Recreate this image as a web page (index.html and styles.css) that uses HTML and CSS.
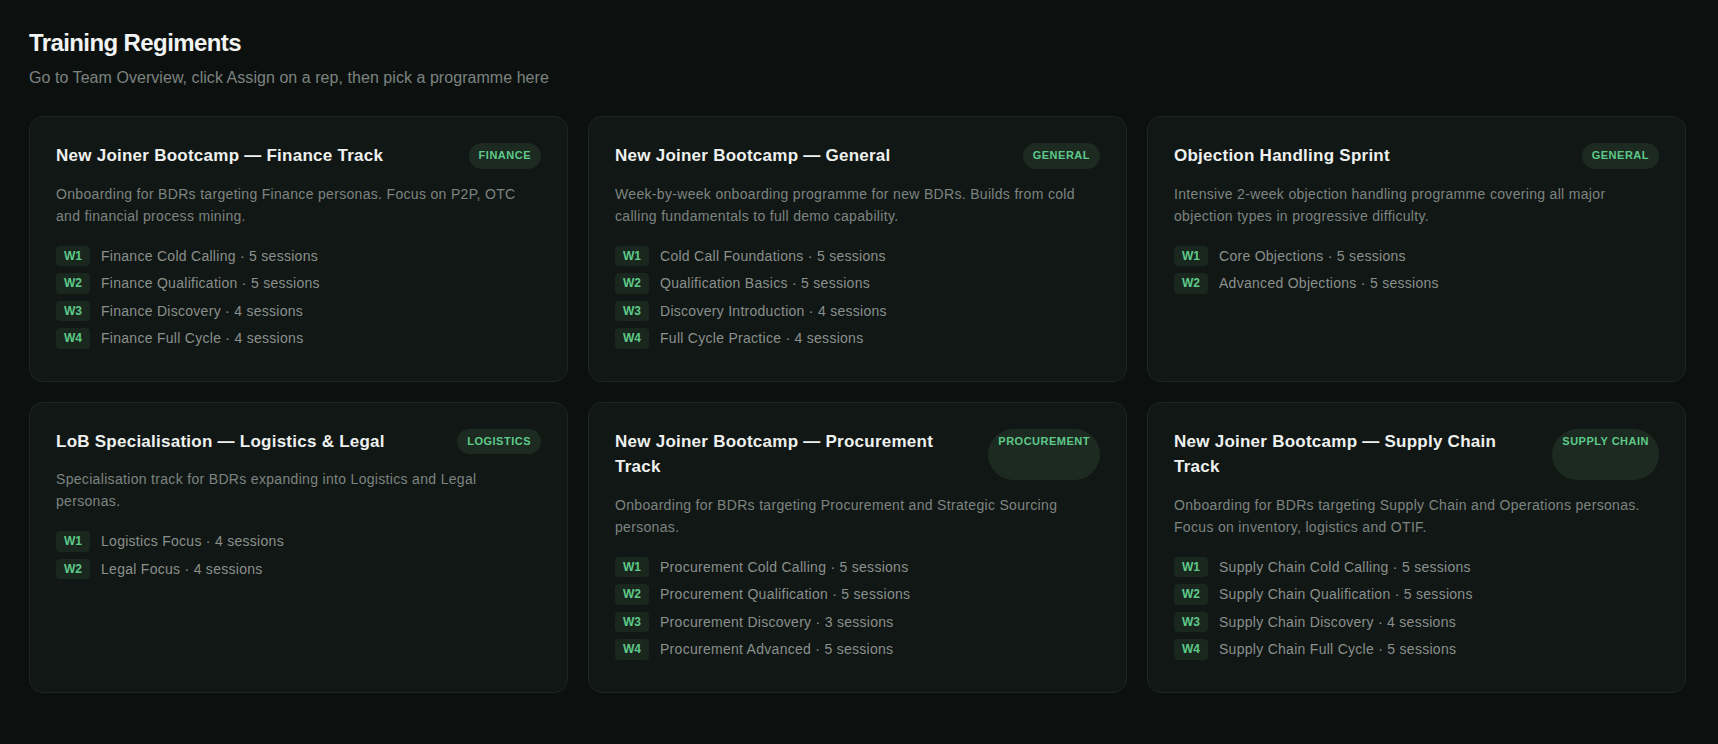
FILE: index.html
```html
<!DOCTYPE html>
<html lang="en">
<head>
<meta charset="utf-8">
<title>Training Regiments</title>
<link rel="stylesheet" href="styles.css">
</head>
<body>
<main class="page">
  <header class="page-head">
    <h1 class="page-title">Training Regiments</h1>
    <p class="page-sub">Go to Team Overview, click Assign on a rep, then pick a programme here</p>
  </header>
  <section class="grid">
    <article class="card">
      <div class="card-head">
        <h2 class="card-title">New Joiner Bootcamp — Finance Track</h2>
        <span class="tag">FINANCE</span>
      </div>
      <p class="card-desc">Onboarding for BDRs targeting Finance personas. Focus on P2P, OTC and financial process mining.</p>
      <ul class="weeks">
        <li class="week"><span class="wk">W1</span><span class="wk-text">Finance Cold Calling · 5 sessions</span></li>
        <li class="week"><span class="wk">W2</span><span class="wk-text">Finance Qualification · 5 sessions</span></li>
        <li class="week"><span class="wk">W3</span><span class="wk-text">Finance Discovery · 4 sessions</span></li>
        <li class="week"><span class="wk">W4</span><span class="wk-text">Finance Full Cycle · 4 sessions</span></li>
      </ul>
    </article>
    <article class="card">
      <div class="card-head">
        <h2 class="card-title">New Joiner Bootcamp — General</h2>
        <span class="tag">GENERAL</span>
      </div>
      <p class="card-desc">Week-by-week onboarding programme for new BDRs. Builds from cold calling fundamentals to full demo capability.</p>
      <ul class="weeks">
        <li class="week"><span class="wk">W1</span><span class="wk-text">Cold Call Foundations · 5 sessions</span></li>
        <li class="week"><span class="wk">W2</span><span class="wk-text">Qualification Basics · 5 sessions</span></li>
        <li class="week"><span class="wk">W3</span><span class="wk-text">Discovery Introduction · 4 sessions</span></li>
        <li class="week"><span class="wk">W4</span><span class="wk-text">Full Cycle Practice · 4 sessions</span></li>
      </ul>
    </article>
    <article class="card">
      <div class="card-head">
        <h2 class="card-title">Objection Handling Sprint</h2>
        <span class="tag">GENERAL</span>
      </div>
      <p class="card-desc">Intensive 2-week objection handling programme covering all major objection types in progressive difficulty.</p>
      <ul class="weeks">
        <li class="week"><span class="wk">W1</span><span class="wk-text">Core Objections · 5 sessions</span></li>
        <li class="week"><span class="wk">W2</span><span class="wk-text">Advanced Objections · 5 sessions</span></li>
      </ul>
    </article>
    <article class="card">
      <div class="card-head">
        <h2 class="card-title">LoB Specialisation — Logistics &amp; Legal</h2>
        <span class="tag">LOGISTICS</span>
      </div>
      <p class="card-desc">Specialisation track for BDRs expanding into Logistics and Legal personas.</p>
      <ul class="weeks">
        <li class="week"><span class="wk">W1</span><span class="wk-text">Logistics Focus · 4 sessions</span></li>
        <li class="week"><span class="wk">W2</span><span class="wk-text">Legal Focus · 4 sessions</span></li>
      </ul>
    </article>
    <article class="card">
      <div class="card-head">
        <h2 class="card-title">New Joiner Bootcamp — Procurement Track</h2>
        <span class="tag">PROCUREMENT</span>
      </div>
      <p class="card-desc">Onboarding for BDRs targeting Procurement and Strategic Sourcing personas.</p>
      <ul class="weeks">
        <li class="week"><span class="wk">W1</span><span class="wk-text">Procurement Cold Calling · 5 sessions</span></li>
        <li class="week"><span class="wk">W2</span><span class="wk-text">Procurement Qualification · 5 sessions</span></li>
        <li class="week"><span class="wk">W3</span><span class="wk-text">Procurement Discovery · 3 sessions</span></li>
        <li class="week"><span class="wk">W4</span><span class="wk-text">Procurement Advanced · 5 sessions</span></li>
      </ul>
    </article>
    <article class="card">
      <div class="card-head">
        <h2 class="card-title">New Joiner Bootcamp — Supply Chain Track</h2>
        <span class="tag">SUPPLY CHAIN</span>
      </div>
      <p class="card-desc">Onboarding for BDRs targeting Supply Chain and Operations personas. Focus on inventory, logistics and OTIF.</p>
      <ul class="weeks">
        <li class="week"><span class="wk">W1</span><span class="wk-text">Supply Chain Cold Calling · 5 sessions</span></li>
        <li class="week"><span class="wk">W2</span><span class="wk-text">Supply Chain Qualification · 5 sessions</span></li>
        <li class="week"><span class="wk">W3</span><span class="wk-text">Supply Chain Discovery · 4 sessions</span></li>
        <li class="week"><span class="wk">W4</span><span class="wk-text">Supply Chain Full Cycle · 5 sessions</span></li>
      </ul>
    </article>
  </section>
</main>
</body>
</html>
```
FILE: styles.css
```css
* { box-sizing: border-box; }

html, body {
  margin: 0;
  padding: 0;
  background: #0c110f;
}

body {
  font-family: "Liberation Sans", Arial, Helvetica, sans-serif;
  color: #e9ecea;
}

.page {
  padding: 28px 32px 40px 29px;
}

.page-head {
  margin-bottom: 26px;
}

.page-title {
  margin: 0;
  font-size: 24px;
  line-height: 29px;
  font-weight: 700;
  letter-spacing: -0.6px;
  color: #f2f4f3;
}

.page-sub {
  margin: 9px 0 0;
  font-size: 16px;
  line-height: 24px;
  letter-spacing: 0.05px;
  color: #7c8380;
}

.grid {
  display: grid;
  grid-template-columns: repeat(3, 1fr);
  gap: 20px;
}

.card {
  background: #111714;
  border: 1px solid #1e2522;
  border-radius: 14px;
  padding: 26px;
}

.card-head {
  display: flex;
  justify-content: space-between;
  align-items: stretch;
  gap: 16px;
}

.card-title {
  margin: 0;
  font-size: 17px;
  line-height: 25.5px;
  font-weight: 700;
  letter-spacing: 0.25px;
  color: #eef1ef;
}

.tag {
  flex-shrink: 0;
  border-radius: 999px;
  background: #1c2a21;
  color: #5ec98a;
  font-size: 11px;
  line-height: 17px;
  font-weight: 700;
  letter-spacing: 0.5px;
  padding: 4px 10px;
}

.card-desc {
  margin: 14px 0 0;
  font-size: 14px;
  line-height: 22px;
  letter-spacing: 0.32px;
  color: #7d8481;
}

.weeks {
  list-style: none;
  margin: 19px 0 0;
  padding: 0 0 6px;
  display: flex;
  flex-direction: column;
  gap: 7px;
}

.week {
  display: flex;
  align-items: center;
  gap: 11px;
}

.wk {
  background: #19271e;
  color: #5ec98a;
  font-size: 12px;
  line-height: 16.5px;
  font-weight: 700;
  padding: 2px 8px;
  border-radius: 4px;
}

.wk-text {
  font-size: 14px;
  line-height: 20px;
  letter-spacing: 0.28px;
  color: #8a908d;
}
```
